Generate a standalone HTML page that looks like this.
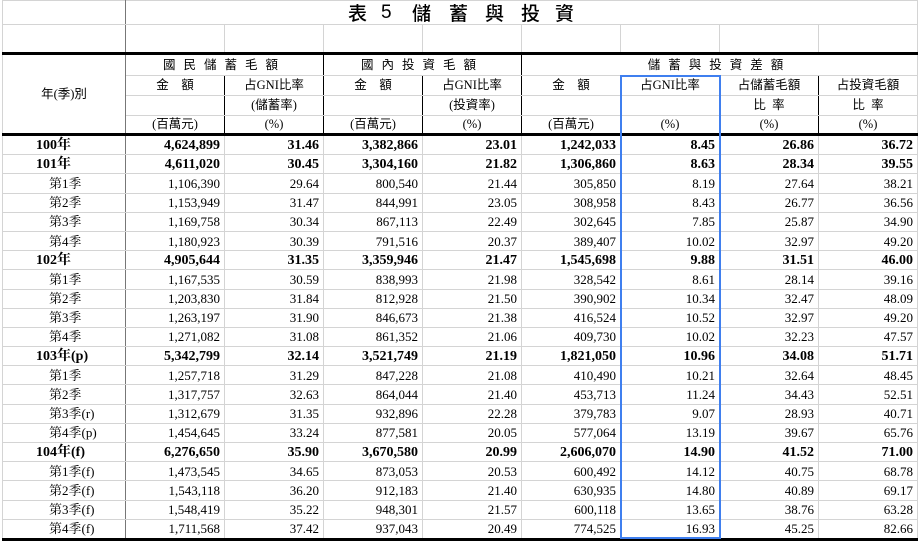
<!DOCTYPE html>
<html><head><meta charset="utf-8">
<style>
html,body{margin:0;padding:0;background:#fff;width:923px;height:543px;overflow:hidden}
table{border-collapse:collapse;table-layout:fixed;position:absolute;left:2px;top:0;font-family:"Liberation Serif","Noto Serif CJK TC","Noto Serif CJK SC",serif;font-size:13px;color:#000}
td{border:1px solid #d4d4d4;padding:0 4px;white-space:nowrap;overflow:hidden;line-height:15px}
td.c0{border-right:1px solid #777}
tr.d td{height:18.2px;text-align:right;font-size:13px}
tr.d td.c0{text-align:left;padding-left:46px}
tr.b td{font-weight:bold;font-size:14px}
tr.b td.c0{padding-left:33px}
.h td{text-align:center;font-family:"Liberation Serif","Noto Sans CJK TC",sans-serif;font-size:12.5px}
.hb{border-right:1px solid #000!important}
.grp{letter-spacing:8px}
#blue{position:absolute;left:620px;top:75px;width:97px;height:460px;border:2px solid #3f7fef;pointer-events:none}
.t{position:absolute;top:2px;font-family:"Noto Sans CJK TC","Noto Sans CJK SC",sans-serif;font-size:19px;line-height:22px;font-weight:500}
</style></head><body>
<table>
<colgroup><col style="width:123px"><col style="width:99px"><col style="width:99px"><col style="width:99px"><col style="width:99px"><col style="width:99px"><col style="width:99px"><col style="width:99px"><col style="width:99px"></colgroup>
<tr style="height:24px"><td class="c0"></td><td colspan="8"></td></tr>
<tr style="height:29px;border-bottom:3px solid #000"><td class="c0"></td><td></td><td></td><td></td><td></td><td></td><td></td><td></td><td></td></tr>
<tr class="h" style="height:22px;border-bottom:1px solid #000"><td class="c0" rowspan="4" style="border-bottom:3px solid #000">年(季)別</td><td colspan="2" class="grp hb">國民儲蓄毛額</td><td colspan="2" class="grp hb">國內投資毛額</td><td colspan="4" class="grp">儲蓄與投資差額</td></tr>
<tr class="h" style="height:20px"><td class="hb">金&nbsp;&nbsp;&nbsp; 額</td><td class="hb">占GNI比率</td><td class="hb">金&nbsp;&nbsp;&nbsp; 額</td><td class="hb">占GNI比率</td><td class="hb">金&nbsp;&nbsp;&nbsp; 額</td><td class="hb">占GNI比率</td><td class="hb">占儲蓄毛額</td><td>占投資毛額</td></tr>
<tr class="h" style="height:20px"><td class="hb"></td><td class="hb">(儲蓄率)</td><td class="hb"></td><td class="hb">(投資率)</td><td class="hb"></td><td class="hb"></td><td class="hb">比&nbsp; 率</td><td>比&nbsp; 率</td></tr>
<tr class="h" style="height:19px;border-bottom:3px solid #000"><td class="hb">(百萬元)</td><td class="hb">(%)</td><td class="hb">(百萬元)</td><td class="hb">(%)</td><td class="hb">(百萬元)</td><td class="hb">(%)</td><td class="hb">(%)</td><td>(%)</td></tr>
<tr class="d b"><td class="c0">100年</td><td>4,624,899</td><td>31.46</td><td>3,382,866</td><td>23.01</td><td>1,242,033</td><td>8.45</td><td>26.86</td><td>36.72</td></tr>
<tr class="d b"><td class="c0">101年</td><td>4,611,020</td><td>30.45</td><td>3,304,160</td><td>21.82</td><td>1,306,860</td><td>8.63</td><td>28.34</td><td>39.55</td></tr>
<tr class="d"><td class="c0">第1季</td><td>1,106,390</td><td>29.64</td><td>800,540</td><td>21.44</td><td>305,850</td><td>8.19</td><td>27.64</td><td>38.21</td></tr>
<tr class="d"><td class="c0">第2季</td><td>1,153,949</td><td>31.47</td><td>844,991</td><td>23.05</td><td>308,958</td><td>8.43</td><td>26.77</td><td>36.56</td></tr>
<tr class="d"><td class="c0">第3季</td><td>1,169,758</td><td>30.34</td><td>867,113</td><td>22.49</td><td>302,645</td><td>7.85</td><td>25.87</td><td>34.90</td></tr>
<tr class="d"><td class="c0">第4季</td><td>1,180,923</td><td>30.39</td><td>791,516</td><td>20.37</td><td>389,407</td><td>10.02</td><td>32.97</td><td>49.20</td></tr>
<tr class="d b"><td class="c0">102年</td><td>4,905,644</td><td>31.35</td><td>3,359,946</td><td>21.47</td><td>1,545,698</td><td>9.88</td><td>31.51</td><td>46.00</td></tr>
<tr class="d"><td class="c0">第1季</td><td>1,167,535</td><td>30.59</td><td>838,993</td><td>21.98</td><td>328,542</td><td>8.61</td><td>28.14</td><td>39.16</td></tr>
<tr class="d"><td class="c0">第2季</td><td>1,203,830</td><td>31.84</td><td>812,928</td><td>21.50</td><td>390,902</td><td>10.34</td><td>32.47</td><td>48.09</td></tr>
<tr class="d"><td class="c0">第3季</td><td>1,263,197</td><td>31.90</td><td>846,673</td><td>21.38</td><td>416,524</td><td>10.52</td><td>32.97</td><td>49.20</td></tr>
<tr class="d"><td class="c0">第4季</td><td>1,271,082</td><td>31.08</td><td>861,352</td><td>21.06</td><td>409,730</td><td>10.02</td><td>32.23</td><td>47.57</td></tr>
<tr class="d b"><td class="c0">103年(p)</td><td>5,342,799</td><td>32.14</td><td>3,521,749</td><td>21.19</td><td>1,821,050</td><td>10.96</td><td>34.08</td><td>51.71</td></tr>
<tr class="d"><td class="c0">第1季</td><td>1,257,718</td><td>31.29</td><td>847,228</td><td>21.08</td><td>410,490</td><td>10.21</td><td>32.64</td><td>48.45</td></tr>
<tr class="d"><td class="c0">第2季</td><td>1,317,757</td><td>32.63</td><td>864,044</td><td>21.40</td><td>453,713</td><td>11.24</td><td>34.43</td><td>52.51</td></tr>
<tr class="d"><td class="c0">第3季(r)</td><td>1,312,679</td><td>31.35</td><td>932,896</td><td>22.28</td><td>379,783</td><td>9.07</td><td>28.93</td><td>40.71</td></tr>
<tr class="d"><td class="c0">第4季(p)</td><td>1,454,645</td><td>33.24</td><td>877,581</td><td>20.05</td><td>577,064</td><td>13.19</td><td>39.67</td><td>65.76</td></tr>
<tr class="d b"><td class="c0">104年(f)</td><td>6,276,650</td><td>35.90</td><td>3,670,580</td><td>20.99</td><td>2,606,070</td><td>14.90</td><td>41.52</td><td>71.00</td></tr>
<tr class="d"><td class="c0">第1季(f)</td><td>1,473,545</td><td>34.65</td><td>873,053</td><td>20.53</td><td>600,492</td><td>14.12</td><td>40.75</td><td>68.78</td></tr>
<tr class="d"><td class="c0">第2季(f)</td><td>1,543,118</td><td>36.20</td><td>912,183</td><td>21.40</td><td>630,935</td><td>14.80</td><td>40.89</td><td>69.17</td></tr>
<tr class="d"><td class="c0">第3季(f)</td><td>1,548,419</td><td>35.22</td><td>948,301</td><td>21.57</td><td>600,118</td><td>13.65</td><td>38.76</td><td>63.28</td></tr>
<tr class="d" style="border-bottom:3px solid #000"><td class="c0">第4季(f)</td><td>1,711,568</td><td>37.42</td><td>937,043</td><td>20.49</td><td>774,525</td><td>16.93</td><td>45.25</td><td>82.66</td></tr>
</table>
<div class="t" style="left:348px">表</div>
<div class="t" style="left:381px;font-family:'Liberation Sans',sans-serif">5</div>
<div class="t" style="left:412px">儲</div>
<div class="t" style="left:449px">蓄</div>
<div class="t" style="left:485px">與</div>
<div class="t" style="left:521px">投</div>
<div class="t" style="left:555px">資</div>
<div id="blue"></div>
</body></html>
